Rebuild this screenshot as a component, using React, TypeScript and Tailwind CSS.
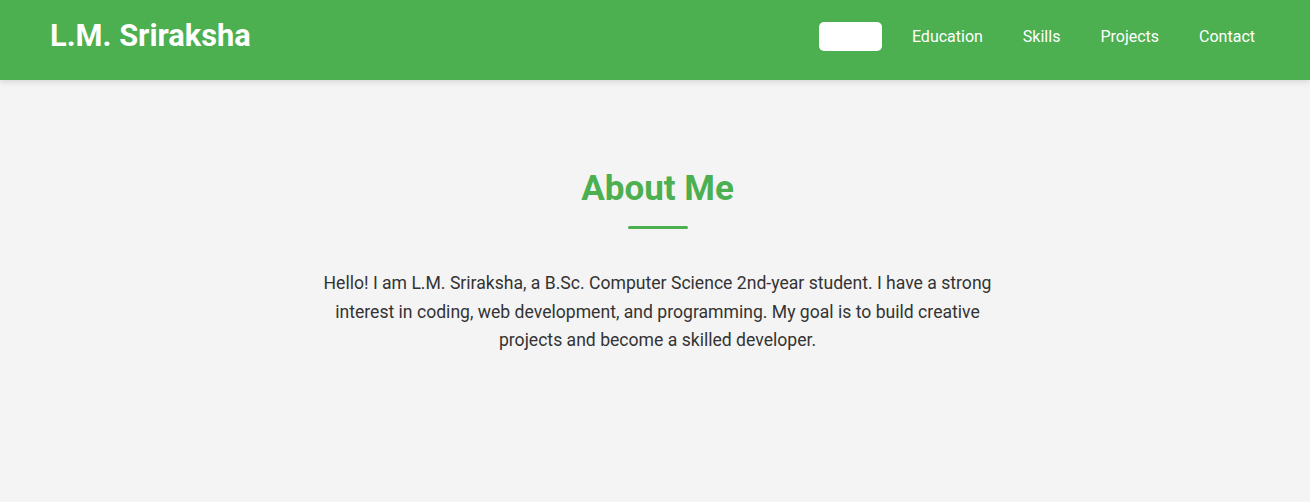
export default function App() {
  const links = ["About", "Education", "Skills", "Projects", "Contact"];
  return (
    <div className="min-h-[502px] bg-[#f4f4f4] font-['Roboto',sans-serif]">
      <header className="relative z-10 flex h-20 items-center justify-between bg-[#4caf50] pb-[8px] pl-[50px] pr-[45px] shadow-[0_2px_6px_rgba(0,0,0,0.12)]">
        <h1 className="text-[30.8px] font-bold leading-none text-white">L.M. Sriraksha</h1>
        <nav className="flex items-center gap-5">
          {links.map((l, i) => (
            <a
              key={l}
              className={
                i === 0
                  ? "rounded-[5px] bg-white px-[10px] py-[5px] text-[16px] leading-[19px] font-normal text-white"
                  : "px-[10px] py-[5px] text-[16px] leading-[19px] font-normal text-white"
              }
            >
              {l}
            </a>
          ))}
        </nav>
      </header>
      <section className="flex flex-col items-center pl-[5px] pt-[88px]">
        <h2 className="text-[35px] font-bold leading-[41px] text-[#4caf50]">About Me</h2>
        <div className="mt-[17px] h-[3px] w-[60px] rounded-full bg-[#4caf50]" />
        <p className="mt-[40px] max-w-[700px] text-center text-[17.6px] leading-[28.5px] text-[#333]">
          Hello! I am L.M. Sriraksha, a B.Sc. Computer Science 2nd-year student. I have a strong interest in coding, web development, and programming. My goal is to build creative projects and become a skilled developer.
        </p>
      </section>
    </div>
  );
}
